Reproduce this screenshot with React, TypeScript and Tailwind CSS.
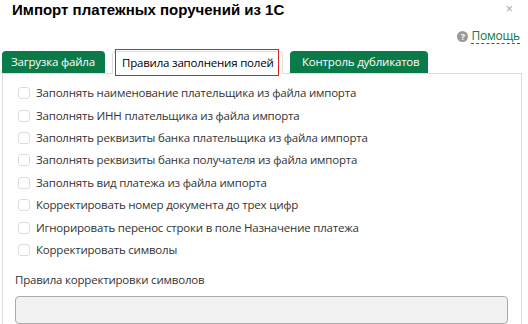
import React from "react";

const items = [
  "Заполнять наименование плательщика из файла импорта",
  "Заполнять ИНН плательщика из файла импорта",
  "Заполнять реквизиты банка плательщика из файла импорта",
  "Заполнять реквизиты банка получателя из файла импорта",
  "Заполнять вид платежа из файла импорта",
  "Корректировать номер документа до трех цифр",
  "Игнорировать перенос строки в поле Назначение платежа",
  "Корректировать символы",
];

export default function App() {
  return (
    <div className="w-[528px] h-[324px] bg-white overflow-hidden relative tracking-[-0.2px]" style={{ fontFamily: '"Open Sans", sans-serif' }}>
      <div className="flex items-start justify-between pl-[12px] pr-[15px] pt-[0px] tracking-normal">
        <div className="text-[15px] font-bold text-black leading-[20px]" style={{ fontFamily: '"Liberation Sans", Arial, sans-serif' }}>
          Импорт платежных поручений из 1С
        </div>
        <div className="text-[#aaa] text-[13px] leading-[14px] mt-[2px]" style={{ fontFamily: '"Liberation Sans", Arial, sans-serif' }}>×</div>
      </div>
      <div className="flex justify-end pr-[8px] mt-[8px] h-[16px]">
        <div className="flex items-center gap-[3px]">
          <span className="w-[11px] h-[11px] rounded-full bg-[#999] text-white text-[9px] font-bold leading-[11px] flex items-center justify-center">?</span>
          <span className="text-[12px] text-[#0b7a48] leading-[14px] border-b border-dashed border-[#0b7a48]">Помощь</span>
        </div>
      </div>
      <div className="flex items-end pl-[2px] gap-[7px] h-[23px] mt-[6px]">
        <div className="h-[22px] bg-[#0a7a49] rounded-t-[4px] text-white text-[11.5px] leading-[22px] pl-[9px] w-[103px] whitespace-nowrap">Загрузка файла</div>
        <div className="h-[23px] bg-white border border-b-0 border-[#ddd] rounded-t-[4px] relative w-[171px] -mb-[1px] z-10">
          <div className="absolute left-[2px] top-[-3px] w-[164px] h-[27px] border border-[#e02020]"></div>
          <div className="text-[11.5px] text-black leading-[22px] pl-[9px] whitespace-nowrap">Правила заполнения полей</div>
        </div>
        <div className="h-[22px] bg-[#0a7a49] rounded-t-[4px] text-white text-[11.5px] leading-[22px] pl-[12px] w-[138px] whitespace-nowrap">Контроль дубликатов</div>
      </div>
      <div className="mx-[2px] w-[520px] border border-[#ddd] border-b-0 h-[260px] pt-[8px] pl-[15px] pr-[14px]">
        <div className="flex flex-col">
          {items.map((t) => (
            <div key={t} className="flex items-center h-[22.4px]">
              <span className="w-[12px] h-[12px] rounded-[3px] border border-[#ddd] bg-white mr-[6px] shrink-0"></span>
              <span className="text-[11.5px] text-[#333] leading-[16px] whitespace-nowrap">{t}</span>
            </div>
          ))}
        </div>
        <div className="text-[11.5px] text-[#333] leading-[16px] mt-[11px] -ml-[3px]">Правила корректировки символов</div>
        <div className="mt-[8px] -ml-[3px] w-[493px] h-[28px] bg-[#f2f2f2] border border-[#aaa] rounded-[4px]"></div>
      </div>
    </div>
  );
}
